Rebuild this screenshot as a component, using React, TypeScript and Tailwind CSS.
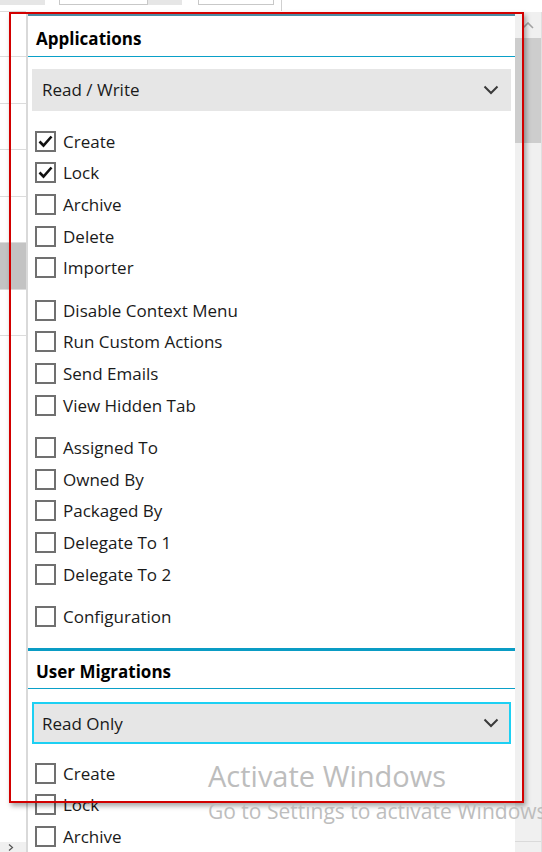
import React from "react";

type Item = { label: string; checked?: boolean };

const appGroups: Item[][] = [
  [
    { label: "Create", checked: true },
    { label: "Lock", checked: true },
    { label: "Archive" },
    { label: "Delete" },
    { label: "Importer" },
  ],
  [
    { label: "Disable Context Menu" },
    { label: "Run Custom Actions" },
    { label: "Send Emails" },
    { label: "View Hidden Tab" },
  ],
  [
    { label: "Assigned To" },
    { label: "Owned By" },
    { label: "Packaged By" },
    { label: "Delegate To 1" },
    { label: "Delegate To 2" },
  ],
  [{ label: "Configuration" }],
];

const migrationItems: Item[] = [{ label: "Create" }, { label: "Lock" }, { label: "Archive" }];

function CheckRow({ item }: { item: Item }) {
  return (
    <div className="flex items-center h-[31.6px] pl-[7px]">
      <div className="w-[21px] h-[21px] border-2 border-[#707070] bg-white flex items-center justify-center">
        {item.checked && (
          <svg width="17" height="17" viewBox="0 0 17 17">
            <path d="M2.5 8.5 L6.5 12.5 L14.5 3.5" fill="none" stroke="#111" strokeWidth="2.6" />
          </svg>
        )}
      </div>
      <span className="ml-[7px] text-[17px] text-[#1a1a1a] leading-none">{item.label}</span>
    </div>
  );
}

function Dropdown({ value, focused }: { value: string; focused?: boolean }) {
  return (
    <div
      className={
        "mx-[4px] h-[42px] bg-[#e6e6e6] flex items-center justify-between " +
        (focused ? "border-2 border-[#1dd0f3] pl-[8px] pr-[10px]" : "pl-[10px] pr-[12px]")
      }
    >
      <span className="text-[17px] text-[#1a1a1a] leading-none">{value}</span>
      <svg width="16" height="10" viewBox="0 0 16 10">
        <polyline points="1.5,1.5 8,8 14.5,1.5" fill="none" stroke="#3a3a3a" strokeWidth="2" />
      </svg>
    </div>
  );
}

function Header({ title }: { title: string }) {
  return (
    <div className="h-[40px] pt-[3px] flex items-center pl-[8px] border-b border-b-[#0aa0c8]">
      <span className="text-[17px] font-bold text-black leading-none">{title}</span>
    </div>
  );
}

const leftRows = [45, 47, 46, 47, 46, 47, 46];

export default function App() {
  return (
    <div
      className="relative w-[542px] h-[852px] overflow-hidden bg-white"
      style={{ fontFamily: '"Open Sans", "Noto Sans", sans-serif' }}
    >
      {/* top strip: ends of toolbar buttons */}
      <div className="flex h-[12px]">
        <div className="w-[26px] border-b border-[#dcdcdc] flex">
          <div className="w-[26px] h-[5px] bg-[#e6e6e6]" />
        </div>
        <div className="flex items-start flex-1">
          <div className="w-[19px] h-[5px] bg-[#e6e6e6]" />
          <div className="w-[14px]" />
          <div className="w-[89px] h-[5px] border border-t-0 border-[#c8c8c8]" />
          <div className="w-[34px] h-[5px] bg-[#e6e6e6]" />
          <div className="w-[16px]" />
          <div className="w-[76px] h-[5px] border border-t-0 border-[#c8c8c8]" />
          <div className="w-[7px]" />
          <div className="w-[1px] h-[11px] bg-[#d0d0d0]" />
        </div>
      </div>

      <div className="flex h-[840px]">
        {/* left grid column */}
        <div className="w-[26px] flex flex-col">
          {leftRows.map((h, i) => (
            <div
              key={i}
              className={"border-b border-[#dcdcdc] " + (i === 5 ? "bg-[#c3c3c3]" : "")}
              style={{ height: h }}
            />
          ))}
          <div className="flex-1" />
          <div className="h-[10px] bg-[#f0f0f0] flex items-end pl-[8px] pb-[1px]">
            <svg width="6" height="7" viewBox="0 0 6 7">
              <polyline points="1,0.5 4.5,3.5 1,6.5" fill="none" stroke="#555" strokeWidth="1.2" />
            </svg>
          </div>
        </div>

        {/* popup panel */}
        <div className="flex-1 border-l-2 border-[#d9d9d9] flex flex-col">
          <div className="h-[1px]" />
          <div className="h-[3px] bg-[#4a8ba3]" />
          <div className="h-[3px]" />
          <Header title="Applications" />
          <div className="pt-[12px]">
            <Dropdown value="Read / Write" />
          </div>
          <div className="pt-[15px] flex flex-col">
            {appGroups.map((g, gi) => (
              <div key={gi} className={gi < appGroups.length - 1 ? "mb-[11px]" : ""}>
                {g.map((item) => (
                  <CheckRow key={item.label} item={item} />
                ))}
              </div>
            ))}
          </div>
          <div className="mt-[16px] h-[3px] bg-[#0a9cc4]" />
          <Header title="User Migrations" />
          <div className="pt-[13px]">
            <Dropdown value="Read Only" focused />
          </div>
          <div className="pt-[13px] flex flex-col">
            {migrationItems.map((item) => (
              <CheckRow key={item.label} item={item} />
            ))}
          </div>
        </div>

        {/* scrollbar */}
        <div className="w-[27px] bg-[#f0f0f0] border-r border-[#e0e0e0] flex flex-col">
          <div className="h-[26px] flex items-center justify-center">
            <svg width="12" height="7" viewBox="0 0 12 7">
              <polyline points="1,6 6,1 11,6" fill="none" stroke="#a3a3a3" strokeWidth="1.6" />
            </svg>
          </div>
          <div className="h-[105px] bg-[#cdcdcd]" />
          <div className="flex-1" />
          <div className="h-[11px] border-t border-[#dadada]" />
        </div>
      </div>

      {/* annotation rectangle */}
      <div className="absolute left-[9px] top-[12px] w-[515px] h-[791px] border-2 border-[#d20000] shadow-[2px_3px_5px_rgba(0,0,0,0.35)] pointer-events-none" />

      {/* windows watermark */}
      <div className="absolute left-[208px] top-[761px] pointer-events-none whitespace-nowrap text-[#bdbdbd] leading-none">
        <div className="text-[29px]">Activate Windows</div>
        <div className="text-[21px] mt-[11px]">Go to Settings to activate Windows.</div>
      </div>
    </div>
  );
}
